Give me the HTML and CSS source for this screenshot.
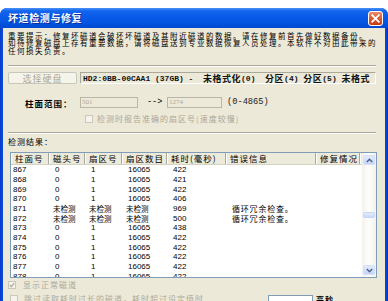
FILE: index.html
```html
<!DOCTYPE html>
<html>
<head>
<meta charset="utf-8">
<link rel="stylesheet" href="styles.css">
</head>
<body>
<div class="window">
  <div class="titlebar">
    <span class="title">坏道检测与修复</span>
    <span class="close">
      <svg width="15" height="15" viewBox="0 0 15 15">
        <defs>
          <linearGradient id="cg" x1="0" y1="0" x2="0" y2="1">
            <stop offset="0" stop-color="#EE8F6E"/>
            <stop offset="0.5" stop-color="#DD5A33"/>
            <stop offset="1" stop-color="#C13A14"/>
          </linearGradient>
        </defs>
        <rect x="0.5" y="0.5" width="14" height="14" rx="2.5" fill="url(#cg)" stroke="#fff" stroke-width="1"/>
        <path d="M4.2 4.2 L10.8 10.8 M10.8 4.2 L4.2 10.8" stroke="#fff" stroke-width="1.8" stroke-linecap="square"/>
      </svg>
    </span>
  </div>
  <div class="client">
    <p class="notice">重要提示：修复坏磁道会破坏坏磁道及其附近磁道的数据。请在修复前首先做好数据备份。<br>如待修复磁盘上存有重要数据，请将磁盘送到专业数据恢复人员处理。本软件不对由此带来的<br>任何损失负责。</p>
    <div class="sep"></div>
    <div class="disk-row">
      <div class="btn">选择硬盘</div>
      <div class="disk-panel">HD2:0BB-00CAA1 (37GB) -&nbsp;&nbsp;<span class="cj">未格式化</span>(0)&nbsp;&nbsp;<span class="cj">分区</span>(4) <span class="cj">分区</span>(5) <span class="cj">未格式</span></div>
    </div>
    <div class="range-row">
      <span class="label">柱面范围：</span>
      <span class="input in1">501</span>
      <span class="arrow">--&gt;</span>
      <span class="input in2">1274</span>
      <span class="hint">(0-4865)</span>
    </div>
    <div class="check-row indent">
      <span class="cb"></span>
      <span class="cb-text">检测时报告准确的扇区号(速度较慢)</span>
    </div>
    <div class="sep sep2"></div>
    <div class="result-label">检测结果：</div>
    <div class="listview">
      <div class="lv-main">
        <div class="lv-head">
          <span class="hc c1">柱面号</span>
          <span class="hc c2">磁头号</span>
          <span class="hc c3">扇区号</span>
          <span class="hc c4">扇区数目</span>
          <span class="hc c5">耗时(毫秒)</span>
          <span class="hc c6">错误信息</span>
          <span class="hc c7">修复情况</span>
          <span class="hc fill"></span>
        </div>
        <div class="lv-body">
          <div class="lr"><span class="c1 first">867</span><span class="c2">0</span><span class="c3">1</span><span class="c4">16065</span><span class="c5">422</span><span class="c6"></span></div>
          <div class="lr"><span class="c1 first">868</span><span class="c2">0</span><span class="c3">1</span><span class="c4">16065</span><span class="c5">421</span><span class="c6"></span></div>
          <div class="lr"><span class="c1 first">869</span><span class="c2">0</span><span class="c3">1</span><span class="c4">16065</span><span class="c5">422</span><span class="c6"></span></div>
          <div class="lr"><span class="c1 first">870</span><span class="c2">0</span><span class="c3">1</span><span class="c4">16065</span><span class="c5">406</span><span class="c6"></span></div>
          <div class="lr"><span class="c1 first">871</span><span class="c2 cjr">未检测</span><span class="c3 cjr">未检测</span><span class="c4 cjr">未检测</span><span class="c5">969</span><span class="c6 err">循环冗余检查。</span></div>
          <div class="lr"><span class="c1 first">872</span><span class="c2 cjr">未检测</span><span class="c3 cjr">未检测</span><span class="c4 cjr">未检测</span><span class="c5">500</span><span class="c6 err">循环冗余检查。</span></div>
          <div class="lr"><span class="c1 first">873</span><span class="c2">0</span><span class="c3">1</span><span class="c4">16065</span><span class="c5">438</span><span class="c6"></span></div>
          <div class="lr"><span class="c1 first">874</span><span class="c2">0</span><span class="c3">1</span><span class="c4">16065</span><span class="c5">422</span><span class="c6"></span></div>
          <div class="lr"><span class="c1 first">875</span><span class="c2">0</span><span class="c3">1</span><span class="c4">16065</span><span class="c5">422</span><span class="c6"></span></div>
          <div class="lr"><span class="c1 first">876</span><span class="c2">0</span><span class="c3">1</span><span class="c4">16065</span><span class="c5">422</span><span class="c6"></span></div>
          <div class="lr"><span class="c1 first">877</span><span class="c2">0</span><span class="c3">1</span><span class="c4">16065</span><span class="c5">422</span><span class="c6"></span></div>
          <div class="lr"><span class="c1 first">878</span><span class="c2">0</span><span class="c3">1</span><span class="c4">16065</span><span class="c5">422</span><span class="c6"></span></div>
        </div>
      </div>
      <div class="vscroll">
        <span class="sb-btn">
          <svg width="7" height="5" viewBox="0 0 7 5"><path d="M0.8 4 L3.5 1.3 L6.2 4" fill="none" stroke="#4D6185" stroke-width="1.4"/></svg>
        </span>
        <span class="sb-thumb"></span>
        <span class="sb-btn">
          <svg width="7" height="5" viewBox="0 0 7 5"><path d="M0.8 1 L3.5 3.7 L6.2 1" fill="none" stroke="#4D6185" stroke-width="1.4"/></svg>
        </span>
      </div>
    </div>
    <div class="check-row show-row">
      <span class="cb checked">
        <svg width="6" height="6" viewBox="0 0 6 6"><path d="M0.8 3 L2.4 4.6 L5.2 1.2" fill="none" stroke="#B5B2A2" stroke-width="1.4"/></svg>
      </span>
      <span class="cb-text">显示正常磁道</span>
    </div>
    <div class="bottom-row">
      <span class="cb"></span>
      <span class="cb-text">跳过读取耗时过长的磁道，耗时超过设定值时</span>
      <span class="input in3"></span>
      <span class="unit">毫秒</span>
    </div>
  </div>
</div>
</body>
</html>
```

FILE: styles.css
```css
html, body {
  margin: 0;
  padding: 0;
  background: #ffffff;
}

body {
  font-family: "Noto Sans CJK SC", "Liberation Sans", sans-serif;
  color: #000;
}

.window {
  margin-top: 8px;
  width: 388px;
  height: 293px;
  background: linear-gradient(90deg, #0B3BC9 0px, #0A4BDA 3px, #0A4BDA 385px, #0833C0 388px);
  border-radius: 7px 7px 0 0;
  overflow: hidden;
  display: flex;
  flex-direction: column;
}

.titlebar {
  flex: none;
  height: 20px;
  display: flex;
  align-items: center;
  justify-content: space-between;
  padding: 0 5px 0 8px;
  background: linear-gradient(#4A93F9 0%, #1466EE 14%, #0A5CE8 40%, #0556E2 70%, #0049CF 100%);
}

.title {
  color: #fff;
  font-size: 10px;
  font-weight: bold;
  letter-spacing: 0.6px;
  text-shadow: 1px 1px 0 #0A2E9C;
  line-height: 12px;
}

.close {
  display: flex;
  width: 15px;
  height: 15px;
}

.client {
  flex: 1;
  margin: 0 3px;
  background: #ECE9D8;
  padding: 4px 5px 0;
  overflow: hidden;
}

.notice {
  margin: 0;
  font-size: 7.5px;
  letter-spacing: 1.5px;
  line-height: 7.4px;
  white-space: nowrap;
}

.sep {
  margin-top: 11px;
  margin-right: 4px;
  height: 0;
  border-top: 1px solid #ACA899;
  border-bottom: 1px solid #ffffff;
}

.sep2 {
  margin-top: 9px;
}

.disk-row {
  display: flex;
  gap: 3px;
  height: 12px;
  margin-top: 5px;
}

.btn {
  box-sizing: border-box;
  width: 69px;
  height: 12px;
  border: 1px solid #C9C7BA;
  border-radius: 2px;
  background: #F5F4EA;
  color: #ACA899;
  font-size: 9px;
  letter-spacing: 1px;
  display: flex;
  align-items: center;
  justify-content: center;
}

.disk-panel {
  box-sizing: border-box;
  width: 296px;
  height: 12px;
  border-top: 1px solid #ACA899;
  border-left: 1px solid #ACA899;
  border-right: 1px solid #ffffff;
  border-bottom: 1px solid #ffffff;
  padding-left: 2px;
  display: flex;
  align-items: center;
  white-space: pre;
  overflow: hidden;
  font-family: "Liberation Mono", "Noto Sans CJK SC", monospace;
  font-size: 8px;
  font-weight: bold;
  color: #111;
}

.disk-panel .cj {
  font-family: "Noto Sans CJK SC", sans-serif;
  font-size: 9px;
  letter-spacing: 0.5px;
}

.range-row {
  display: flex;
  align-items: center;
  height: 11px;
  margin-top: 13px;
}

.label {
  margin-left: 17px;
  width: 55px;
  font-size: 8.5px;
  letter-spacing: 1px;
  font-weight: bold;
  white-space: nowrap;
}

.input {
  box-sizing: border-box;
  height: 11px;
  border: 1px solid #BAB7A8;
  background: #ECE9D8;
  color: #ACA899;
  font-family: "Liberation Serif", serif;
  font-size: 7px;
  line-height: 9px;
  padding-left: 1px;
}

.in1 {
  width: 58px;
}

.arrow {
  margin-left: 9px;
  width: 16px;
  font-family: "Liberation Mono", monospace;
  font-size: 8.5px;
  line-height: 11px;
}

.in2 {
  margin-left: 4px;
  width: 55px;
}

.hint {
  margin-left: 5px;
  font-family: "Liberation Mono", monospace;
  font-size: 8.7px;
  line-height: 11px;
  color: #222;
}

.check-row {
  display: flex;
  align-items: center;
  height: 8px;
  margin-top: 7px;
}

.indent {
  padding-left: 77px;
}

.cb {
  box-sizing: border-box;
  flex: none;
  width: 8px;
  height: 8px;
  border: 1px solid #CAC8BB;
  background: #F4F3EE;
  display: flex;
  align-items: center;
  justify-content: center;
}

.cb-text {
  margin-left: 4px;
  color: #ACA899;
  font-size: 8px;
  letter-spacing: 1px;
  line-height: 8px;
  white-space: nowrap;
}

.result-label {
  margin-top: 4px;
  font-size: 8px;
  letter-spacing: 1px;
  line-height: 8px;
}

.listview {
  box-sizing: border-box;
  margin-top: 6px;
  margin-left: 2px;
  width: 367px;
  height: 126px;
  border: 1px solid #7F9DB9;
  background: #ffffff;
  display: flex;
  overflow: hidden;
}

.lv-main {
  flex: 1;
  min-width: 0;
  display: flex;
  flex-direction: column;
  overflow: hidden;
}

.lv-head {
  flex: none;
  display: flex;
  height: 12px;
  background: #EBEADB;
  border-bottom: 1px solid #D6D2C2;
  box-sizing: border-box;
}

.hc {
  box-sizing: border-box;
  flex: none;
  height: 11px;
  border-right: 1px solid #A7A6A0;
  box-shadow: inset 1px 0 0 #ffffff;
  padding-left: 4px;
  font-size: 8.5px;
  letter-spacing: 1px;
  line-height: 11px;
  white-space: nowrap;
  overflow: hidden;
}

.hc.fill {
  flex: 1;
  border-right: none;
}

.c1 { width: 38px; }
.c2 { width: 36px; }
.c3 { width: 37px; }
.c4 { width: 45px; }
.c5 { width: 59px; }
.c6 { width: 90px; }
.c7 { width: 44px; }

.lv-body {
  flex: 1;
  overflow: hidden;
}

.lr {
  display: flex;
  height: 9.7px;
  font-family: "Liberation Sans", sans-serif;
  font-size: 8px;
  line-height: 9.7px;
  white-space: nowrap;
}

.lr span {
  box-sizing: border-box;
  flex: none;
  padding-left: 6px;
  overflow: hidden;
}

.lr span.first {
  padding-left: 2px;
}

.lr span.cjr {
  padding-left: 4px;
  font-family: "Noto Sans CJK SC", sans-serif;
  font-size: 7.5px;
}

.lr span.err {
  font-family: "Noto Sans CJK SC", sans-serif;
  font-size: 8px;
  letter-spacing: 0.8px;
}

.vscroll {
  flex: none;
  width: 14px;
  background: linear-gradient(90deg, #F3F1EC, #FEFEFB 50%, #F3F1EC);
  display: flex;
  flex-direction: column;
  justify-content: space-between;
  align-items: center;
  padding: 2px 0;
  box-sizing: border-box;
}

.sb-btn {
  box-sizing: border-box;
  width: 12px;
  height: 10px;
  border: 1px solid #D2DEFB;
  border-radius: 2px;
  background: linear-gradient(#E3EBFE, #C4D4FA);
  display: flex;
  align-items: center;
  justify-content: center;
}

.sb-thumb {
  box-sizing: border-box;
  width: 12px;
  height: 6px;
  border: 1px solid #C5D4F8;
  border-radius: 2px;
  background: linear-gradient(#E6EDFD, #C9D7FA);
}

.show-row {
  margin-top: 3px;
}

.show-row .cb-text {
  margin-left: 7px;
}

.bottom-row {
  display: flex;
  align-items: flex-start;
  margin-top: 6px;
  height: 11px;
}

.bottom-row .cb {
  margin-left: 2px;
}

.bottom-row .cb-text {
  width: 238px;
  margin-left: 6px;
}

.in3 {
  width: 45px;
  margin-left: 6px;
  background: #ffffff;
  border-color: #7F9DB9;
}

.unit {
  margin-left: 3px;
  font-size: 8px;
  letter-spacing: 1px;
  font-weight: bold;
  line-height: 9px;
}
```
